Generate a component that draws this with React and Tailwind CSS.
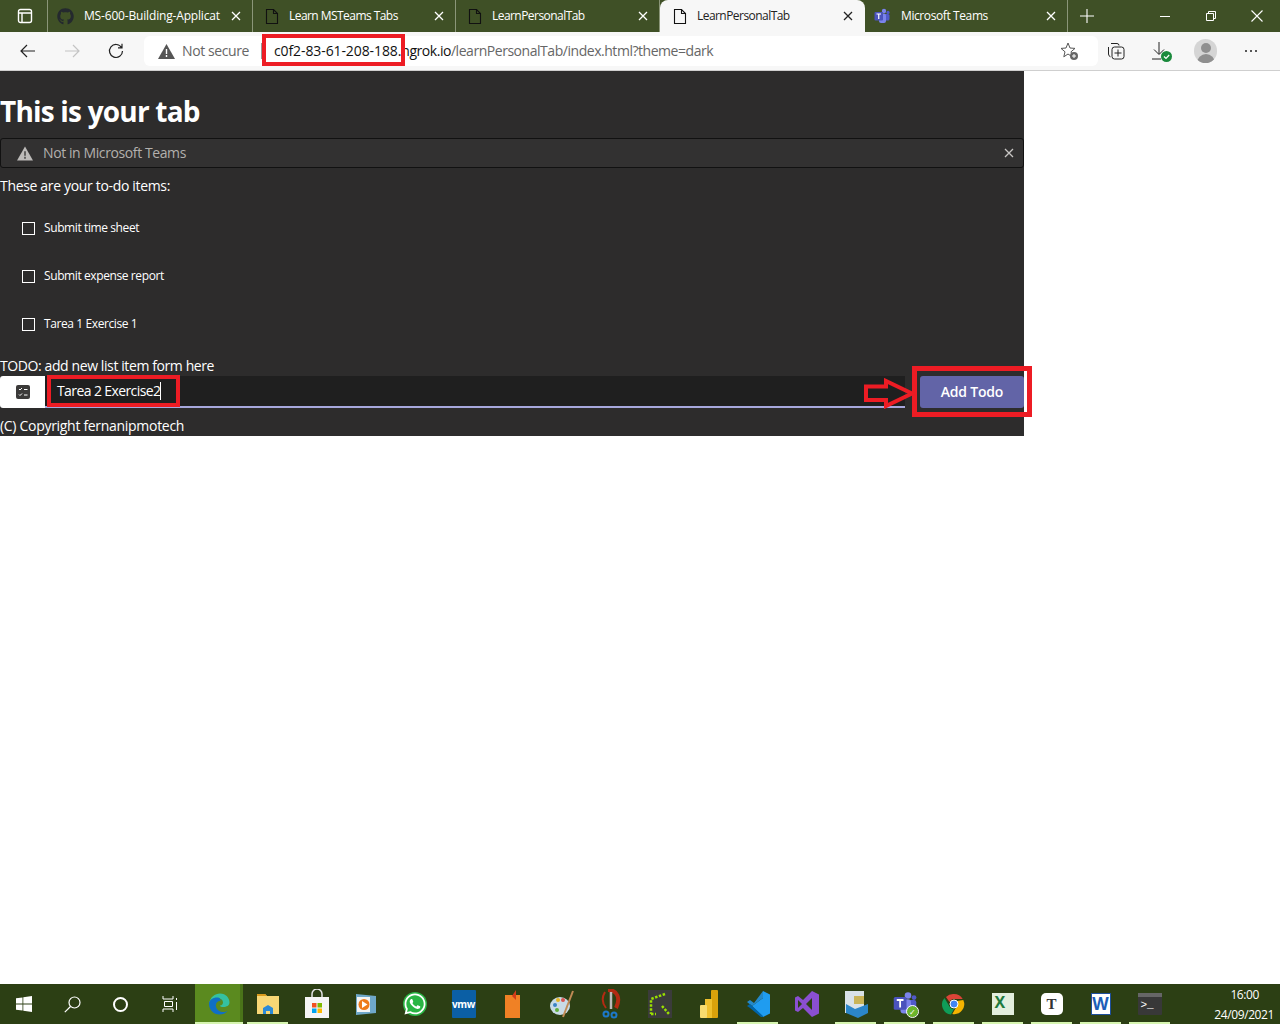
import React from 'react';
import { FaGithub, FaWhatsapp } from 'react-icons/fa';

const Doc = () => (
  <svg width="14" height="17" viewBox="0 0 14 17" fill="none" stroke="#111" strokeWidth="1.1" className="shrink-0">
    <path d="M1.5 1.5h7l4 4v10h-11z" />
    <path d="M8.5 1.5v4h4" />
  </svg>
);

const X = ({ color = '#fff' }) => (
  <svg width="10" height="10" viewBox="0 0 10 10" stroke={color} strokeWidth="1.3" className="shrink-0">
    <path d="M1 1l8 8M9 1l-8 8" />
  </svg>
);

const TeamsGlyph = ({ size = 16 }) => (
  <svg width={size} height={size} viewBox="0 0 16 16">
    <circle cx="10" cy="3" r="2.2" fill="#7b83eb" />
    <circle cx="14" cy="4.4" r="1.6" fill="#5059c9" />
    <rect x="10" y="6" width="5.5" height="6.5" rx="1.5" fill="#5059c9" />
    <rect x="5" y="5.5" width="7" height="9.5" rx="2" fill="#7b83eb" />
    <rect x="0.5" y="4" width="8.5" height="8.5" rx="1" fill="#4b53bc" />
    <path d="M2.5 6h4.5M4.75 6v5" stroke="#fff" strokeWidth="1.2" />
  </svg>
);

function Tab({ icon, title, width, active, track, first }) {
  if (active) {
    return (
      <div className="flex h-8 items-center gap-[10px] rounded-t-lg bg-[#f7f7f7] pl-[13px] pr-[12px]" style={{ width }}>
        {icon}
        <span className={`flex-1 whitespace-nowrap text-[12px] text-[#222] ${track}`}>{title}</span>
        <X color="#222" />
      </div>
    );
  }
  return (
    <div className={`flex h-8 items-center border-r border-[#8b9679] pr-[11px] ${first ? 'gap-[10px] pl-[9px]' : 'gap-[10px] pl-[12px]'}`} style={{ width }}>
      {icon}
      <span className={`flex-1 overflow-hidden whitespace-nowrap text-[12px] text-white ${track}`}>{title}</span>
      <X />
    </div>
  );
}

function Annotation({ className }) {
  return <div className={`absolute border-[#ed1c24] ${className}`} />;
}

const Running = ({ on }) => (on ? <span className="absolute bottom-0 left-[4px] right-[4px] h-[2px] bg-[#d6f5b0]" /> : null);

const taskIcons = [
  { on: true, node: (
    <svg width="24" height="24" viewBox="0 0 24 24">
      <path d="M2 12C3 5 8 1.500 13 1.500c6 0 9.500 4.500 9.500 9 0 3-3 4.500-6 4.500-2 0-3.500-.5-3.500-1.500 2 0 3-1.500 3-3 0-3-3-4.500-5.500-4.500C6 6 3 8 2 12z" fill="#35c1a0" />
      <path d="M2 12c0-4 4-6.500 8-6.500 3 0 4 2 3 3.500-3 0-4.500 2.500-4 5.500.5 3.500 4 5.500 7.500 5.500 1.500 0 3-.5 4-1-2 2.500-5 3.500-8 3.500-6 0-10.500-5-10.500-10.500z" fill="#0f6fc6" />
    </svg>
  ) },
  { on: true, node: (
    <svg width="22" height="22" viewBox="0 0 22 22">
      <path d="M0 1h8l2 2h12v18H0z" fill="#f8d775" />
      <path d="M0 1h8l2 2H0z" fill="#d99a1c" />
      <path d="M6 21v-6l5-3 5 3v6h-3v-3h-4v3z" fill="#2b8ad8" />
    </svg>
  ) },
  { on: false, node: (
    <svg width="24" height="30" viewBox="0 0 24 30">
      <path d="M7 9V5a5 5 0 0110 0v4" fill="none" stroke="#e4e4e4" strokeWidth="1.500" />
      <rect y="8" width="24" height="21" fill="#f5f5f5" />
      <rect x="7" y="14" width="4.500" height="4.500" fill="#f25022" />
      <rect x="12.500" y="14" width="4.500" height="4.500" fill="#7fba00" />
      <rect x="7" y="19.500" width="4.500" height="4.500" fill="#00a4ef" />
      <rect x="12.500" y="19.500" width="4.500" height="4.500" fill="#ffb900" />
    </svg>
  ) },
  { on: false, node: (
    <svg width="20" height="23" viewBox="0 0 20 23">
      <path d="M0 1l20 2v17L0 22z" fill="#6fa8c9" />
      <rect x="1" y="4" width="13" height="15" fill="#f4f4f4" />
      <circle cx="8" cy="11.500" r="5.500" fill="#ee7b1b" />
      <path d="M6 8l5.500 3.500L6 15z" fill="#fff" />
    </svg>
  ) },
  { on: false, node: <span className="flex h-6 w-6 items-center justify-center rounded-full bg-[#2ab544]"><FaWhatsapp size={24} color="#fff" /></span> },
  { on: false, node: <span className="flex h-[28px] w-[24px] items-center justify-center rounded-[1px] bg-[#0b5fa5] text-[10px] font-bold tracking-[-0.4px] text-white">vmw</span> },
  { on: false, node: (
    <svg width="15" height="28" viewBox="0 0 15 28">
      <rect y="5" width="15" height="23" fill="#f08125" />
      <path d="M7 6l4-6v10z" fill="#d23b1a" />
    </svg>
  ) },
  { on: false, node: (
    <svg width="24" height="28" viewBox="0 0 24 28">
      <ellipse cx="10" cy="16" rx="10" ry="9" fill="#c9dbe6" />
      <circle cx="5" cy="15" r="2" fill="#3b82c4" />
      <circle cx="8" cy="10" r="2" fill="#e6b422" />
      <circle cx="13" cy="10" r="2" fill="#d9534f" />
      <circle cx="7" cy="20" r="2" fill="#5fae3d" />
      <path d="M23 1L13 27" stroke="#c08a55" strokeWidth="2" />
    </svg>
  ) },
  { on: false, node: (
    <svg width="20" height="30" viewBox="0 0 20 30" fill="none">
      <path d="M7 1c9 0 13 8 8 18" stroke="#b32a12" strokeWidth="4" />
      <path d="M4 3c-3 5-3 11 1 16" stroke="#b32a12" strokeWidth="2" />
      <path d="M10 3v17" stroke="#bbb" strokeWidth="2.500" />
      <circle cx="5" cy="25" r="2.500" stroke="#1c78c9" strokeWidth="2" />
      <circle cx="13" cy="26" r="2.500" stroke="#1c78c9" strokeWidth="2" />
    </svg>
  ) },
  { on: false, node: (
    <span className="relative block h-[28px] w-6 bg-[#3b3b3b]">
      <svg width="24" height="28" viewBox="0 0 24 28" fill="none" stroke="#9ae000" strokeWidth="2.500" strokeDasharray="2.500 1.500">
        <path d="M17 4L3 9v15M3 24h5M14 16l7 8" />
      </svg>
    </span>
  ) },
  { on: false, node: (
    <svg width="18" height="28" viewBox="0 0 18 28">
      <rect x="11" width="7" height="28" rx="1" fill="#d9a20b" />
      <rect x="5" y="9" width="7" height="19" fill="#efc02c" />
      <rect y="15" width="7" height="13" rx="1" fill="#f7dc6f" />
    </svg>
  ) },
  { on: true, node: (
    <svg width="24" height="28" viewBox="0 0 24 28">
      <path d="M17 1l7 3.500v19L17 27 6 16l11-8z" fill="#1f9cf0" />
      <path d="M17 1v7L6 16l-5-4 3-2 4 3z" fill="#2489ca" />
      <path d="M1 16l3-2 13 12v1h-2L4 18z" fill="#0065a9" />
    </svg>
  ) },
  { on: false, node: (
    <svg width="24" height="28" viewBox="0 0 24 28">
      <path d="M17 1l7 3.500v19L17 27 8 18l-5 4-3-1.500v-13L3 6l5 4z" fill="#8a4fd1" />
      <path d="M17 8v12l-6-6z" fill="#2c3f14" />
      <path d="M3 10l4 4-4 4z" fill="#2c3f14" />
    </svg>
  ) },
  { on: true, node: (
    <svg width="24" height="28" viewBox="0 0 24 28">
      <rect x="1" y="1" width="19" height="22" fill="#d9e2e8" />
      <rect x="10" y="6" width="10" height="8" fill="#c9b458" />
      <path d="M2 14l9 5 13-5v9l-10 5-12-5z" fill="#2b86c9" />
    </svg>
  ) },
  { on: true, node: (
    <span className="relative block h-[26px] w-6">
      <TeamsGlyph size={24} />
      <span className="absolute bottom-0 right-[-1px] flex h-[11px] w-[11px] items-center justify-center rounded-full bg-[#6bb52b] text-[8px] leading-none text-white outline outline-1 outline-white">✓</span>
    </span>
  ) },
  { on: true, node: (
    <svg width="24" height="24" viewBox="0 0 24 24">
      <path d="M12 2a10 10 0 018.700 5H12a5 5 0 00-4.500 3L4 5a10 10 0 018-3z" fill="#db4437" />
      <path d="M2.500 6l5 8.500A5 5 0 0012 17l-3 5.500A10 10 0 012.500 6z" fill="#0f9d58" />
      <path d="M21.300 8a10 10 0 01-11 14l4-7a5 5 0 00.500-6z" fill="#f4b400" />
      <circle cx="12" cy="12" r="4" fill="#4285f4" stroke="#fff" strokeWidth="1" />
    </svg>
  ) },
  { on: true, node: (
    <span className="flex h-[22px] w-[22px] items-start bg-[#e3eedd] pl-[3px] text-[16px] font-bold leading-[18px] text-[#1f7a3d]">X</span>
  ) },
  { on: true, node: (
    <span className="flex h-[22px] w-[22px] items-center justify-center rounded-[5px] bg-white text-[15px] font-bold text-[#333] [font-family:'Liberation_Serif',serif]">T</span>
  ) },
  { on: true, node: (
    <span className="flex h-[22px] w-[20px] items-center justify-center border border-[#1d4f9c] bg-white text-[17px] font-bold text-[#1d5fb8]">W</span>
  ) },
  { on: true, node: (
    <span className="flex h-[22px] w-6 flex-col rounded-[1px] bg-[#383838]">
      <span className="h-[4px] w-full bg-[#666]" />
      <span className="pl-[3px] pt-[3px] text-[11px] leading-none text-white [font-family:'Liberation_Mono',monospace]">&gt;_</span>
    </span>
  ) },
];

export default function App() {
  return (
    <div className="relative flex h-[1024px] w-[1280px] flex-col overflow-hidden bg-white [font-family:'Open_Sans',sans-serif]">
      {/* Tab strip */}
      <div className="flex h-8 items-center bg-[#3f5026]">
        <div className="flex h-8 w-[48px] items-center border-r border-[#8b9679] pl-[17px]">
          <svg width="16" height="16" viewBox="0 0 16 16" fill="none" stroke="#fff" strokeWidth="1.4">
            <rect x="1.500" y="1.500" width="13" height="13" rx="2" />
            <path d="M1.500 5h13M5 5v9" />
          </svg>
        </div>
        <Tab width={205} first track="tracking-[-0.17px]" icon={<FaGithub size={17} color="#24292e" className="shrink-0" />} title="MS-600-Building-Applicat" />
        <Tab width={203} track="tracking-[-0.55px]" icon={<Doc />} title="Learn MSTeams Tabs" />
        <Tab width={204} track="tracking-[-0.55px]" icon={<Doc />} title="LearnPersonalTab" />
        <Tab width={205} active track="tracking-[-0.55px]" icon={<Doc />} title="LearnPersonalTab" />
        <div className="flex h-8 w-[203px] items-center gap-[11px] border-r border-[#8b9679] pl-[9px] pr-[11px]">
          <TeamsGlyph />
          <span className="flex-1 text-[12px] tracking-[-0.4px] text-white">Microsoft Teams</span>
          <X />
        </div>
        <div className="flex w-[38px] justify-center">
          <svg width="14" height="14" viewBox="0 0 14 14" stroke="#fff" strokeWidth="1.1"><path d="M7 0v14M0 7h14" /></svg>
        </div>
        <div className="ml-auto flex items-center">
          <div className="flex w-[46px] justify-center"><span className="h-px w-[10px] bg-white" /></div>
          <div className="flex w-[46px] justify-center">
            <svg width="10" height="10" viewBox="0 0 10 10" fill="none" stroke="#fff"><path d="M.5 2.500h7v7h-7zM2.500 2.500v-2h7v7h-2" /></svg>
          </div>
          <div className="flex w-[46px] justify-center"><svg width="12" height="12" viewBox="0 0 12 12" stroke="#fff" strokeWidth="1.1"><path d="M.5.500l11 11M11.500.500l-11 11" /></svg></div>
        </div>
      </div>

      {/* Toolbar */}
      <div className="flex h-[39px] items-center border-b border-[#cfcfcf] bg-[#f7f7f7]">
        <div className="flex w-[144px] items-center pl-5">
          <svg width="16" height="14" viewBox="0 0 16 14" fill="none" stroke="#222" strokeWidth="1.2"><path d="M15 7H1M7 1L1 7l6 6" /></svg>
          <svg width="16" height="14" viewBox="0 0 16 14" fill="none" stroke="#c4c4c4" strokeWidth="1.2" className="ml-7"><path d="M1 7h14M9 1l6 6-6 6" /></svg>
          <svg width="16" height="16" viewBox="0 0 16 16" fill="none" stroke="#222" strokeWidth="1.2" className="ml-7"><path d="M13.500 4.500A6.500 6.500 0 1014.500 8M14 .8v4h-4" /></svg>
        </div>
        <div className="flex h-[30px] w-[954px] items-center rounded-md bg-white pl-[14px] text-[14px]">
          <svg width="17" height="15" viewBox="0 0 17 15"><path d="M8.500 0L17 15H0z" fill="#555" /><path d="M8.500 5v5M8.500 11v2" stroke="#fff" strokeWidth="1.400" /></svg>
          <span className="mb-[2px] ml-[7px] tracking-[-0.4px] text-[#666]">Not secure</span>
          <span className="ml-[12px] h-4 w-px bg-[#999]" />
          <span className="mb-[2px] ml-[12px] whitespace-nowrap tracking-[-0.1px] text-[#111]">c0f2-83-61-208-188.<span className="tracking-[-0.46px]">ngrok.io</span><span className="tracking-[-0.46px] text-[#666]">/learnPersonalTab/index.html?theme=dark</span></span>
          <svg width="20" height="20" viewBox="0 0 20 20" className="ml-auto mr-[19px]" fill="none">
            <path d="M9 2l2 5 5 .4-4 3.400 1.200 5L9 13l-4.200 2.800 1.200-5-4-3.400 5-.4z" stroke="#555" />
            <circle cx="15" cy="15" r="4" fill="#666" />
            <path d="M15 13v4M13 15h4" stroke="#fff" />
          </svg>
        </div>
        <div className="flex items-center pl-[8px]">
          <svg width="20" height="20" viewBox="0 0 20 20" fill="none" stroke="#222">
            <path d="M5 2.500h6a2 2 0 012 2M2.500 6v7a3 3 0 002 2.800" />
            <rect x="6" y="6" width="12" height="12" rx="2.500" />
            <path d="M12 8.500v7M8.500 12h7" />
          </svg>
          <span className="relative ml-[24px] block h-5 w-5">
            <svg width="20" height="20" viewBox="0 0 20 20" fill="none" stroke="#222"><path d="M9 1v12M4 8.500l5 5 5-5M2 18h9" /></svg>
            <svg width="11" height="11" viewBox="0 0 11 11" className="absolute bottom-[-1px] right-[-2px]">
              <circle cx="5.500" cy="5.500" r="5.500" fill="#1a8a3c" />
              <path d="M3 5.500l2 2 3.200-3.500" stroke="#fff" strokeWidth="1.200" fill="none" />
            </svg>
          </span>
          <span className="ml-[24px] flex h-[24px] w-[23px] flex-col items-center overflow-hidden rounded-full bg-[#d5d5d5] pt-[4px]">
            <span className="h-[10px] w-[10px] rounded-full bg-[#8f8f8f]" />
            <span className="mt-px h-[10px] w-[18px] rounded-t-full bg-[#8f8f8f]" />
          </span>
          <span className="ml-[28px] flex gap-[3px]">
            <span className="h-[2px] w-[2px] rounded-full bg-[#222]" />
            <span className="h-[2px] w-[2px] rounded-full bg-[#222]" />
            <span className="h-[2px] w-[2px] rounded-full bg-[#222]" />
          </span>
        </div>
      </div>

      {/* Page */}
      <main className="flex-1 bg-white">
        <div className="flex w-[1024px] flex-col bg-[#2d2c2c] pt-[19px] text-[14px] leading-5 tracking-[-0.33px] text-white">
          <h1 className="h-[48px] text-[28px] font-bold leading-[42px] tracking-[-0.8px]">This is your tab</h1>
          <div className="flex h-[30px] items-center rounded-[3px] border border-[#111] bg-[#323131] pl-4 pr-[9px] tracking-[-0.4px] text-[#b3b0ad]">
            <svg width="16" height="15" viewBox="0 0 17 15"><path d="M8.500 0L17 15H0z" fill="#bdbbb9" /><path d="M8.500 5v5M8.500 11v2" stroke="#323131" strokeWidth="1.400" /></svg>
            <span className="ml-[10px] flex-1">Not in Microsoft Teams</span>
            <X color="#c8c6c4" />
          </div>
          <p className="mt-2">These are your to-do items:</p>
          <ul className="mt-2 flex flex-col">
            {['Submit time sheet', 'Submit expense report', 'Tarea 1 Exercise 1'].map((item) => (
              <li key={item} className="flex h-12 items-center pl-[22px]">
                <span className="h-[13px] w-[13px] border border-white" />
                <span className="ml-[9px] text-[12px] tracking-[-0.4px]">{item}</span>
              </li>
            ))}
          </ul>
          <p className="mt-2 tracking-[-0.4px]">TODO: add new list item form here</p>
          <div className="flex h-8 items-stretch">
            <div className="flex w-[45px] shrink-0 items-center justify-center rounded-l-[3px] bg-white">
              <svg width="14" height="14" viewBox="0 0 14 14">
                <rect width="14" height="14" rx="2" fill="#3b3a39" />
                <path d="M3 4l1 1 2-2M3 9.500l1 1 2-2M8 4.500h3.500M8 10h3.500" stroke="#fff" fill="none" />
              </svg>
            </div>
            <div className="flex w-[860px] shrink-0 items-center border-b-2 border-[#a6a7dc] bg-[#1f1f1f] pl-3">
              <span className="text-[14px] tracking-[-0.6px]">Tarea 2 Exercise2</span>
              <span className="h-[18px] w-px bg-white" />
            </div>
            <button className="ml-[15px] w-[104px] shrink-0 rounded-[3px] bg-[#6264a7] text-[14px] font-semibold tracking-[-0.2px] text-white">Add Todo</button>
          </div>
          <p className="mt-2 tracking-[-0.3px]">(C) Copyright fernanipmotech</p>
        </div>
      </main>

      {/* Taskbar */}
      <footer className="flex h-10 items-center bg-[#2c3f14]">
        <div className="flex w-12 justify-center">
          <svg width="16" height="16" viewBox="0 0 16 16" fill="#fff"><path d="M0 2.300l6.500-.9v6.200H0zM7.300 1.300L16 0v7.600H7.300zM0 8.400h6.500v6.200L0 13.700zM7.300 8.400H16V16l-8.700-1.300z" /></svg>
        </div>
        <div className="flex w-12 justify-center">
          <svg width="17" height="17" viewBox="0 0 17 17" fill="none" stroke="#fff" strokeWidth="1.200"><circle cx="10.500" cy="6.500" r="5.500" /><path d="M6.500 10.500L.8 16.200" /></svg>
        </div>
        <div className="flex w-12 justify-center"><span className="h-[15px] w-[15px] rounded-full border-2 border-white" /></div>
        <div className="flex w-[51px] justify-center">
          <svg width="16" height="16" viewBox="0 0 16 16" fill="none" stroke="#fff"><path d="M1 3h10V0M1 3V0M2.500 5.500h8v5h-8zM1 13h10v3M1 13v3M14.500 2v2" /><path d="M14.500 6v8" /></svg>
        </div>
        <div className="flex w-[854px] items-center">
          {taskIcons.map((t, i) => (
            <div key={i} className={`relative flex h-10 shrink-0 items-center justify-center ${i === 0 ? 'w-[48px] bg-[#5b8a1f]' : 'w-[49px]'}`}>
              {t.node}
              {i === 0 ? <span className="absolute bottom-0 right-0 top-0 w-[3px] bg-[#4a7419]" /> : null}
              {i === 0 ? <span className="absolute bottom-0 left-0 right-0 h-[2px] bg-[#d6f5b0]" /> : <Running on={t.on} />}
            </div>
          ))}
        </div>
        <div className="ml-auto flex flex-col items-end pr-[6px] pt-px text-right text-[12px] leading-[20px] tracking-[-0.4px] text-white">
          <span className="mr-[15px]">16:00</span>
          <span>24/09/2021</span>
        </div>
      </footer>

      {/* Red annotations drawn over the screenshot */}
      <Annotation className="left-[262px] top-[34px] h-[32px] w-[143px] border-[4px]" />
      <Annotation className="left-[47px] top-[375px] h-[32px] w-[133px] border-[4px]" />
      <Annotation className="left-[912px] top-[366px] h-[51px] w-[120px] border-[5px]" />
      <svg className="absolute left-[863px] top-[378px]" width="52" height="31" viewBox="0 0 52 31" fill="none" stroke="#ed1c24" strokeWidth="4">
        <path d="M3 8.500h20V3l26 12.500L23 28v-6H3z" />
      </svg>
    </div>
  );
}
